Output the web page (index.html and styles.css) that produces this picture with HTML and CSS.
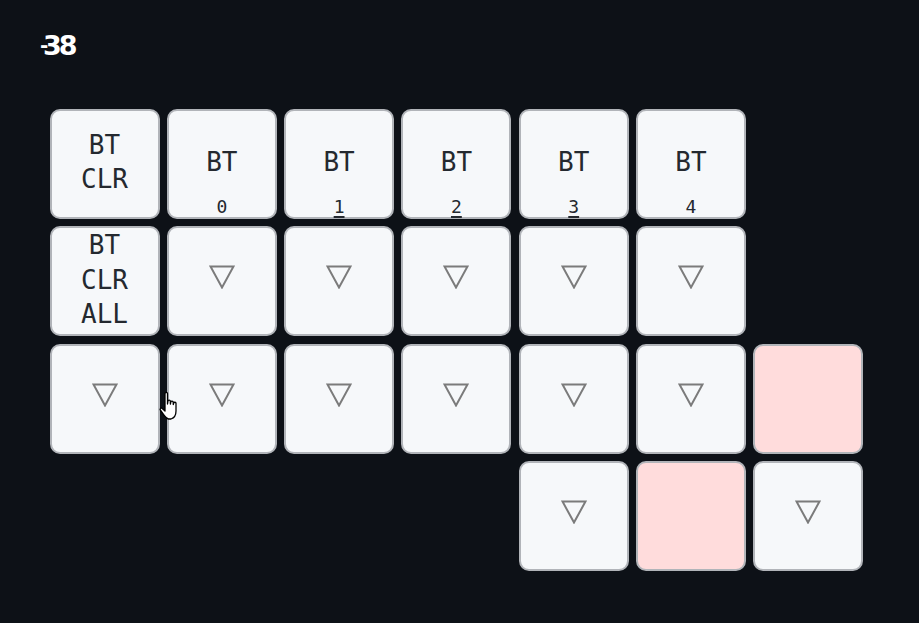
FILE: index.html
```html
<!DOCTYPE html>
<html>
<head>
<meta charset="utf-8">
<link rel="stylesheet" href="styles.css">
</head>
<body>
<div class="page">
  <div class="title"><span class="t-b">-</span><span class="t-3">3</span><span class="t-8">8</span></div>
  <div class="board">
    <div class="key"><div class="main">BT<br>CLR</div></div>
    <div class="key"><div class="main">BT</div><div class="sub">0</div></div>
    <div class="key"><div class="main">BT</div><div class="sub"><u>1</u></div></div>
    <div class="key"><div class="main">BT</div><div class="sub"><u>2</u></div></div>
    <div class="key"><div class="main">BT</div><div class="sub"><u>3</u></div></div>
    <div class="key"><div class="main">BT</div><div class="sub">4</div></div>
    <div class="empty"></div>

    <div class="key"><div class="main">BT<br>CLR<br>ALL</div></div>
    <div class="key tri"><svg viewBox="0 0 26 24" width="26" height="24"><polygon points="1.5,1.5 24.5,1.5 13,22.5"/></svg></div>
    <div class="key tri"><svg viewBox="0 0 26 24" width="26" height="24"><polygon points="1.5,1.5 24.5,1.5 13,22.5"/></svg></div>
    <div class="key tri"><svg viewBox="0 0 26 24" width="26" height="24"><polygon points="1.5,1.5 24.5,1.5 13,22.5"/></svg></div>
    <div class="key tri"><svg viewBox="0 0 26 24" width="26" height="24"><polygon points="1.5,1.5 24.5,1.5 13,22.5"/></svg></div>
    <div class="key tri"><svg viewBox="0 0 26 24" width="26" height="24"><polygon points="1.5,1.5 24.5,1.5 13,22.5"/></svg></div>
    <div class="empty"></div>

    <div class="key tri"><svg viewBox="0 0 26 24" width="26" height="24"><polygon points="1.5,1.5 24.5,1.5 13,22.5"/></svg></div>
    <div class="key tri"><svg viewBox="0 0 26 24" width="26" height="24"><polygon points="1.5,1.5 24.5,1.5 13,22.5"/></svg></div>
    <div class="key tri"><svg viewBox="0 0 26 24" width="26" height="24"><polygon points="1.5,1.5 24.5,1.5 13,22.5"/></svg></div>
    <div class="key tri"><svg viewBox="0 0 26 24" width="26" height="24"><polygon points="1.5,1.5 24.5,1.5 13,22.5"/></svg></div>
    <div class="key tri"><svg viewBox="0 0 26 24" width="26" height="24"><polygon points="1.5,1.5 24.5,1.5 13,22.5"/></svg></div>
    <div class="key tri"><svg viewBox="0 0 26 24" width="26" height="24"><polygon points="1.5,1.5 24.5,1.5 13,22.5"/></svg></div>
    <div class="key pink"></div>

    <div class="empty"></div>
    <div class="empty"></div>
    <div class="empty"></div>
    <div class="empty"></div>
    <div class="key tri"><svg viewBox="0 0 26 24" width="26" height="24"><polygon points="1.5,1.5 24.5,1.5 13,22.5"/></svg></div>
    <div class="key pink"></div>
    <div class="key tri"><svg viewBox="0 0 26 24" width="26" height="24"><polygon points="1.5,1.5 24.5,1.5 13,22.5"/></svg></div>
  </div>
  <svg class="cursor" viewBox="0 0 24 32" width="24" height="32">
    <path d="M7 3.5 C7 2 9.5 2 9.5 3.5 L9.5 14 L10 11 C10 9.8 12.3 9.8 12.3 11 L12.4 14 L12.8 12 C13 10.8 15.2 10.8 15.2 12.2 L15.3 14.5 L15.7 13 C16 11.9 18 12 18 13.3 L18 21 C18 25 16 28 13 29 L10.5 29 C8.5 28.5 7 26.5 5.5 24.5 L2.3 20 C1.5 18.8 3 17.4 4.2 18.4 L7 21 Z" fill="#fff" stroke="#000" stroke-width="1.3" stroke-linejoin="round"/>
  </svg>
</div>
</body>
</html>
```

FILE: styles.css
```css
html, body {
  margin: 0;
  padding: 0;
  background: #0d1117;
}
.page {
  position: relative;
  width: 919px;
  height: 623px;
  padding: 31px 0 0 41px;
  box-sizing: border-box;
  font-family: "DejaVu Sans Mono", monospace;
}
.title {
  position: relative;
  height: 30px;
  color: #ffffff;
  font-family: "DejaVu Sans", sans-serif;
  font-weight: bold;
  font-size: 27px;
  line-height: 30px;
  display: flex;
}
.t-b {
  position: absolute;
  left: -1px;
  top: -1px;
  font-size: 20px;
}
.t-3 {
  margin-left: 2px;
}
.t-8 {
  margin-left: -3px;
}
.board {
  margin-top: 48px;
  margin-left: 8.5px;
  display: grid;
  grid-template-columns: repeat(7, 110px);
  grid-auto-rows: 110px;
  gap: 7.3px;
}
.key {
  box-sizing: border-box;
  background: #f6f8fa;
  border: 2px solid #b1b4b9;
  border-radius: 10px;
  display: grid;
  grid-template-rows: 1fr auto 1fr;
  justify-items: center;
  color: #24292f;
}
.key .main {
  grid-row: 2;
  font-size: 26px;
  line-height: 34.5px;
  text-align: center;
  margin-bottom: 4px;
}
.key .sub {
  grid-row: 3;
  align-self: end;
  font-size: 18px;
  line-height: 20px;
  padding-bottom: 0;
}
.key .sub u {
  text-decoration-thickness: 2px;
  text-underline-offset: 3px;
}
.key.tri {
  display: flex;
  align-items: center;
  justify-content: center;
  padding-bottom: 8px;
}
.key.tri polygon {
  fill: none;
  stroke: #7b7b7b;
  stroke-width: 2;
  stroke-linejoin: miter;
}
.key.pink {
  background: #ffdcdc;
}
.cursor {
  position: absolute;
  left: 158px;
  top: 390px;
}
```
